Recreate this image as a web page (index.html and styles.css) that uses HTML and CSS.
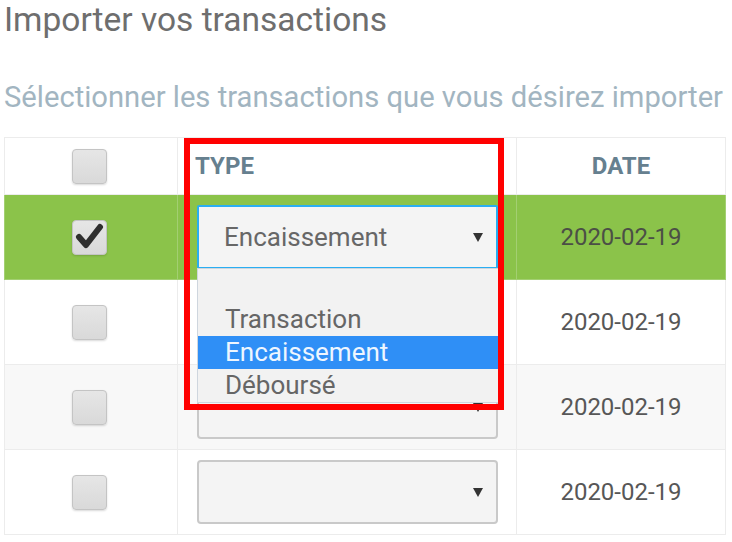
FILE: index.html
```html
<!DOCTYPE html>
<html lang="fr">
<head>
    <meta charset="UTF-8">
    <title>Importer vos transactions</title>
    <link rel="stylesheet" href="styles.css">
</head>
<body>
    <h1 class="title">Importer vos transactions</h1>
    <p class="subtitle">Sélectionner les transactions que vous désirez importer</p>

    <div class="table-wrap">
        <table class="tx-table">
            <thead>
                <tr>
                    <th class="col-check"><span class="checkbox"></span></th>
                    <th class="col-type">TYPE</th>
                    <th class="col-date">DATE</th>
                </tr>
            </thead>
            <tbody>
                <tr class="selected">
                    <td class="col-check">
                        <span class="checkbox">
                            <svg width="35" height="35" viewBox="0 0 35 35"><path d="M7 17 L14 25 L28 7" fill="none" stroke="#2f2f2f" stroke-width="6" stroke-linecap="round" stroke-linejoin="round"/></svg>
                        </span>
                    </td>
                    <td class="col-type">
                        <div class="select-wrap">
                            <div class="select focused"><span>Encaissement</span><span class="arrow"></span></div>
                            <!-- liste ouverte -->
                            <ul class="dropdown">
                                <li></li>
                                <li>Transaction</li>
                                <li class="active">Encaissement</li>
                                <li>Déboursé</li>
                            </ul>
                        </div>
                    </td>
                    <td class="col-date">2020-02-19</td>
                </tr>
                <tr>
                    <td class="col-check"><span class="checkbox"></span></td>
                    <td class="col-type"><div class="select"><span></span><span class="arrow"></span></div></td>
                    <td class="col-date">2020-02-19</td>
                </tr>
                <tr class="striped">
                    <td class="col-check"><span class="checkbox"></span></td>
                    <td class="col-type"><div class="select"><span></span><span class="arrow"></span></div></td>
                    <td class="col-date">2020-02-19</td>
                </tr>
                <tr>
                    <td class="col-check"><span class="checkbox"></span></td>
                    <td class="col-type"><div class="select"><span></span><span class="arrow"></span></div></td>
                    <td class="col-date">2020-02-19</td>
                </tr>
            </tbody>
        </table>
        <!-- annotation rouge -->
        <div class="highlight-box"></div>
    </div>
</body>
</html>
```

FILE: styles.css
```css
body {
    margin: 0;
    font-family: Roboto, "Liberation Sans", sans-serif;
    background-color: #ffffff;
    width: 732px;
    height: 542px;
    overflow: hidden;
}

.title {
    margin: 0;
    padding-left: 4px;
    font-size: 33.5px;
    font-weight: 400;
    line-height: 40px;
    color: #6e6e6e;
}

.subtitle {
    margin: 40px 0 23px 0;
    padding-left: 4px;
    font-size: 29.2px;
    line-height: 34px;
    color: #a2b5c1;
    white-space: nowrap;
}

.table-wrap {
    position: relative;
    margin-left: 4px;
    width: 722px;
}

.tx-table {
    width: 722px;
    border-collapse: collapse;
    table-layout: fixed;
}

.tx-table th,
.tx-table td {
    border: 1px solid #ececec;
    padding: 0;
    vertical-align: middle;
}

.tx-table thead tr {
    height: 57px;
}

.tx-table tbody tr {
    height: 85px;
}

.col-check {
    width: 172px;
    text-align: center;
}

.col-type {
    width: 321px;
    padding-left: 19px !important;
    text-align: left;
}

.col-date {
    text-align: center;
    font-size: 24px;
    color: #575757;
}

th {
    font-size: 24px;
    font-weight: 700;
    color: #66808f;
}

th.col-type {
    padding-left: 17px !important;
}

th.col-date {
    font-size: 24px;
    color: #66808f;
}

tr.selected td {
    background-color: #8bc34a;
    border-color: #a3cf72;
}

tr.selected td.col-date {
    color: #4b4f46;
}

tr.striped td {
    background-color: #f8f8f8;
}

.checkbox {
    display: inline-block;
    width: 33px;
    height: 33px;
    margin-left: -3px;
    vertical-align: middle;
    background: linear-gradient(#e6e6e6, #d9d9d9);
    border: 1px solid #c4c4c4;
    border-radius: 4px;
    box-shadow: 0 1px 2px rgba(0,0,0,0.15);
    position: relative;
}

.checkbox svg {
    position: absolute;
    left: -1px;
    top: -1px;
}

.select-wrap {
    position: relative;
    width: 301px;
}

.select {
    display: flex;
    align-items: center;
    justify-content: space-between;
    box-sizing: border-box;
    width: 301px;
    height: 64px;
    padding: 0 13px 0 25px;
    background-color: #f4f4f4;
    border: 2px solid #c9c9c9;
    border-radius: 4px;
    font-size: 26px;
    color: #676767;
}

.select.focused {
    border-color: #2aaef2;
    border-radius: 2px;
}

.arrow {
    width: 0;
    height: 0;
    border-left: 5px solid transparent;
    border-right: 5px solid transparent;
    border-top: 9px solid #333333;
}

.dropdown {
    position: absolute;
    top: 63px;
    left: 0;
    width: 302px;
    box-sizing: border-box;
    margin: 0;
    padding: 0;
    list-style: none;
    background-color: #f2f2f2;
    border: 1px solid #cfd6de;
    z-index: 2;
}

.dropdown li {
    height: 33px;
    line-height: 33px;
    padding-left: 27px;
    font-size: 26px;
    color: #666666;
}

.dropdown li:first-child {
    height: 34px;
}

.dropdown li.active {
    background-color: #2f8ff6;
    color: #eef6ff;
}

.highlight-box {
    position: absolute;
    left: 180px;
    top: 1px;
    width: 308px;
    height: 260px;
    border: 6px solid #ff0000;
    z-index: 3;
}
```
